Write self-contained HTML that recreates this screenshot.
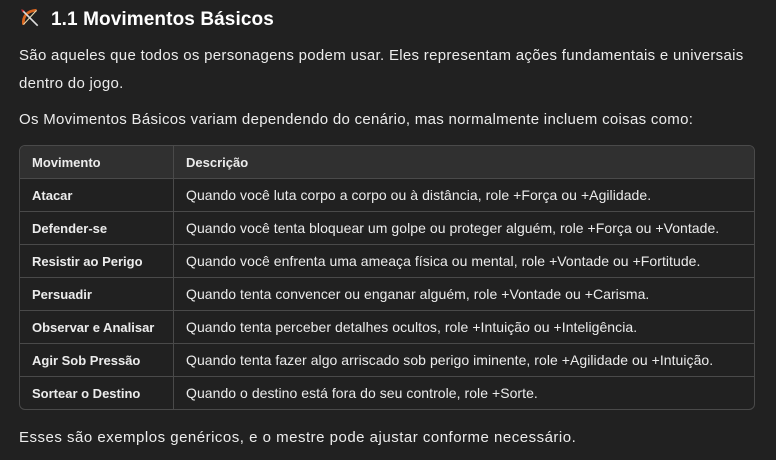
<!DOCTYPE html>
<html><head><meta charset="utf-8"><style>
body{margin:0;background:#212121;color:#ececec;font-family:"Liberation Sans",sans-serif;width:776px;height:460px;overflow:hidden}
.w{position:absolute;left:19px;top:0;width:736px}
h3{position:absolute;left:0;top:7px;margin:0;font-size:19px;font-weight:bold;color:#fff;white-space:nowrap;letter-spacing:0.1px}
p{position:absolute;left:0;margin:0;font-size:15px;line-height:28px;white-space:nowrap;letter-spacing:0.3px}
table{position:absolute;left:0;top:145px;width:736px;border-collapse:separate;border-spacing:0;border:1px solid #4a4a4a;border-radius:6px;overflow:hidden;font-size:14px;letter-spacing:0.05px}
td,th{height:32px;padding:0 12px;text-align:left;border-bottom:1px solid #4a4a4a;white-space:nowrap}
tr:last-child td{border-bottom:none}
th{background:#303030;font-weight:bold;height:32px;font-size:13px;letter-spacing:0}
td:first-child,th:first-child{width:129px;border-right:1px solid #4a4a4a;font-weight:bold;font-size:13px;letter-spacing:0}
</style></head><body><div class="w">
<h3><svg width="22" height="22" viewBox="0 0 20 20" style="vertical-align:-4px;margin-right:10px"><path d="M4 16 Q3 4 16 3" stroke="#d9651e" stroke-width="2.5" fill="none"/><path d="M4 16 L16 3" stroke="#e8d9b0" stroke-width="1"/><path d="M3 3 L17 17" stroke="#ddd" stroke-width="1.5"/><path d="M2 2 l3 1 -2 2z" fill="#c33"/></svg>1.1 Movimentos Básicos</h3>
<p style="top:42px">São aqueles que todos os personagens podem usar. Eles representam ações fundamentais e universais</p>
<p style="top:70px">dentro do jogo.</p>
<p style="top:106px">Os Movimentos Básicos variam dependendo do cenário, mas normalmente incluem coisas como:</p>
<table>
<tr><th>Movimento</th><th>Descrição</th></tr>
<tr><td>Atacar</td><td>Quando você luta corpo a corpo ou à distância, role +Força ou +Agilidade.</td></tr>
<tr><td>Defender-se</td><td>Quando você tenta bloquear um golpe ou proteger alguém, role +Força ou +Vontade.</td></tr>
<tr><td>Resistir ao Perigo</td><td>Quando você enfrenta uma ameaça física ou mental, role +Vontade ou +Fortitude.</td></tr>
<tr><td>Persuadir</td><td>Quando tenta convencer ou enganar alguém, role +Vontade ou +Carisma.</td></tr>
<tr><td>Observar e Analisar</td><td>Quando tenta perceber detalhes ocultos, role +Intuição ou +Inteligência.</td></tr>
<tr><td>Agir Sob Pressão</td><td>Quando tenta fazer algo arriscado sob perigo iminente, role +Agilidade ou +Intuição.</td></tr>
<tr><td>Sortear o Destino</td><td>Quando o destino está fora do seu controle, role +Sorte.</td></tr>
</table>
<p style="top:424px;letter-spacing:0.5px">Esses são exemplos genéricos, e o mestre pode ajustar conforme necessário.</p>
</div></body></html>
